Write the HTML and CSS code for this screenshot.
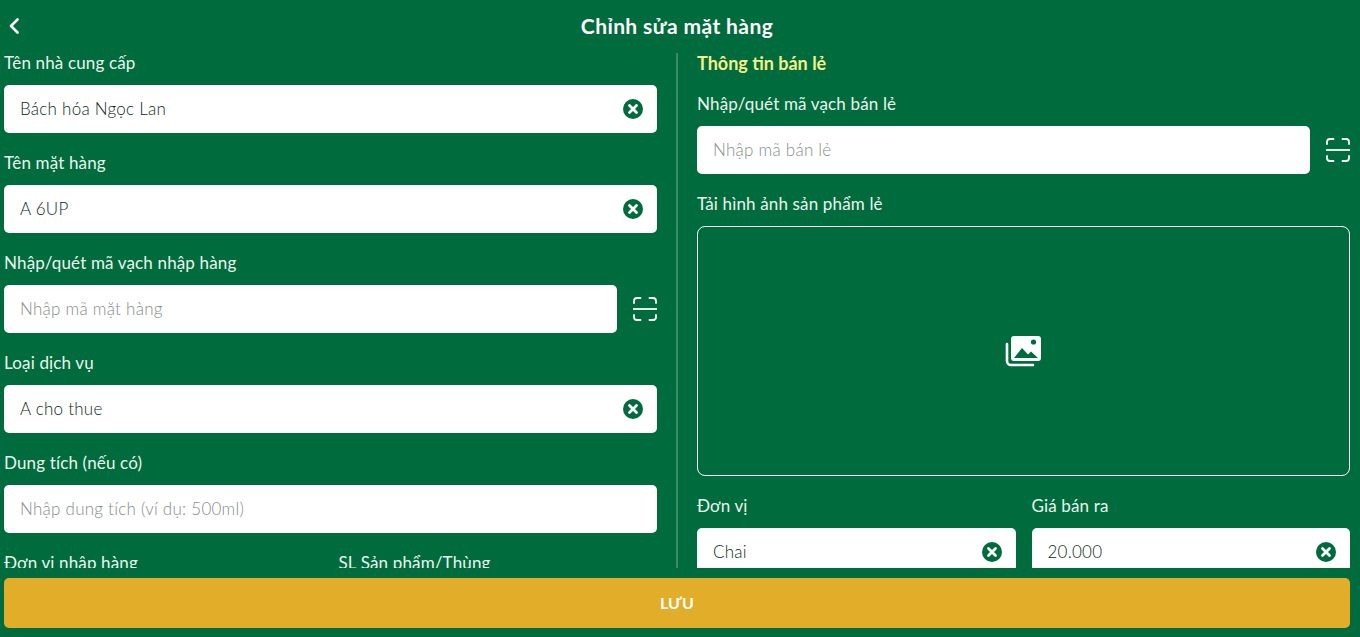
FILE: index.html
```html
<!DOCTYPE html>
<html lang="vi">
  <head>
    <meta charset="UTF-8" />
    <title>Chỉnh sửa mặt hàng</title>
    <link rel="stylesheet" href="styles.css">
  </head>

  <body>
    <svg class="icon-defs" width="0" height="0">
      <symbol id="clear" viewBox="0 0 20 20">
        <circle cx="10" cy="10" r="10" fill="#006b3c" />
        <path d="M6.500 6.500l7 7M13.500 6.500l-7 7" stroke="#fff" stroke-width="2.800" stroke-linecap="round" />
      </symbol>
      <symbol id="scan" viewBox="0 0 24 24">
        <path d="M1 6V4a3 3 0 0 1 3-3h3.500M16.500 1H20a3 3 0 0 1 3 3v2M1 18v2a3 3 0 0 0 3 3h3.500M16.500 23H20a3 3 0 0 0 3-3v-2" fill="none" stroke="#fff" stroke-width="1.800" stroke-linecap="round" />
        <path d="M0 12h24" stroke="#fff" stroke-width="1.800" />
      </symbol>
    </svg>

    <!-- Header -->
    <header class="topbar">
      <svg class="back-icon" width="12" height="16" viewBox="0 0 12 16">
        <path d="M9.500 1.500L3 8l6.500 6.500" fill="none" stroke="#fff" stroke-width="2.600" stroke-linecap="round" stroke-linejoin="round" />
      </svg>
      <h1>Chỉnh sửa mặt hàng</h1>
    </header>

    <!-- Form -->
    <main class="form-area">
      <section class="column">
        <div class="field">
          <label>Tên nhà cung cấp</label>
          <div class="input-row">
            <div class="input"><span>Bách hóa Ngọc Lan</span><svg class="clear-icon"><use href="#clear" /></svg></div>
          </div>
        </div>
        <div class="field">
          <label>Tên mặt hàng</label>
          <div class="input-row">
            <div class="input"><span>A 6UP</span><svg class="clear-icon"><use href="#clear" /></svg></div>
          </div>
        </div>
        <div class="field">
          <label>Nhập/quét mã vạch nhập hàng</label>
          <div class="input-row">
            <div class="input placeholder"><span>Nhập mã mặt hàng</span></div>
            <svg class="scan-icon"><use href="#scan" /></svg>
          </div>
        </div>
        <div class="field">
          <label>Loại dịch vụ</label>
          <div class="input-row">
            <div class="input"><span>A cho thue</span><svg class="clear-icon"><use href="#clear" /></svg></div>
          </div>
        </div>
        <div class="field">
          <label>Dung tích (nếu có)</label>
          <div class="input-row">
            <div class="input placeholder"><span>Nhập dung tích (ví dụ: 500ml)</span></div>
          </div>
        </div>
        <div class="field-pair">
          <div class="field">
            <label>Đơn vị nhập hàng</label>
          </div>
          <div class="field">
            <label>SL Sản phẩm/Thùng</label>
          </div>
        </div>
      </section>

      <section class="column column-right">
        <h2>Thông tin bán lẻ</h2>
        <div class="field">
          <label>Nhập/quét mã vạch bán lẻ</label>
          <div class="input-row">
            <div class="input placeholder"><span>Nhập mã bán lẻ</span></div>
            <svg class="scan-icon"><use href="#scan" /></svg>
          </div>
        </div>
        <div class="field">
          <label>Tải hình ảnh sản phẩm lẻ</label>
          <div class="upload-box">
            <svg width="36" height="32" viewBox="0 0 36 32">
              <path d="M2 9v17a4 4 0 0 0 4 4h22" fill="none" stroke="#fff" stroke-width="2.600" stroke-linecap="round" />
              <rect x="6" y="1" width="30" height="25" rx="3" fill="#fff" />
              <circle cx="28.500" cy="7" r="2.600" fill="#006b3c" />
              <path d="M9 23l8-10 6 6.500 3-3 7 6.500z" fill="#006b3c" />
            </svg>
          </div>
        </div>
        <div class="field-pair">
          <div class="field">
            <label>Đơn vị</label>
            <div class="input-row">
              <div class="input"><span>Chai</span><svg class="clear-icon"><use href="#clear" /></svg></div>
            </div>
          </div>
          <div class="field">
            <label>Giá bán ra</label>
            <div class="input-row">
              <div class="input"><span>20.000</span><svg class="clear-icon"><use href="#clear" /></svg></div>
            </div>
          </div>
        </div>
      </section>
    </main>

    <!-- Save -->
    <div class="footer">
      <button class="save-button">LƯU</button>
    </div>
  </body>
</html>
```

FILE: styles.css
```css
/* General Styles */
html,
body {
  height: 100%;
}

body {
  font-family: "Lato", "Noto Sans", Arial, sans-serif;
  margin: 0;
  background-color: #006b3c;
  color: #fff;
  overflow: hidden;
  display: flex;
  flex-direction: column;
}

.icon-defs {
  display: none;
}

/* Header */
.topbar {
  height: 53px;
  flex: none;
  box-sizing: border-box;
  padding: 0 6px 2px 0;
  display: flex;
  align-items: center;
  justify-content: center;
  position: relative;
}

.topbar h1 {
  margin: 0;
  font-size: 21px;
  font-weight: 700;
  letter-spacing: 0.4px;
}

.back-icon {
  position: absolute;
  left: 8px;
  top: 18px;
}

/* Form */
.form-area {
  height: 515px;
  flex: none;
  overflow: hidden;
  display: grid;
  grid-template-columns: 653px 653px;
  column-gap: 40px;
  padding: 0 10px 0 4px;
}

.column {
  display: flex;
  flex-direction: column;
  gap: 20px;
  min-width: 0;
}

.column-right {
  position: relative;
}

.column-right::before {
  content: "";
  position: absolute;
  left: -21px;
  top: 0;
  bottom: 0;
  width: 2px;
  background-color: #3d8a63;
}

.column-right h2 {
  margin: 0;
  height: 21px;
  line-height: 21px;
  font-size: 18px;
  font-weight: 700;
  color: #f4f08a;
}

.field label {
  display: block;
  height: 32px;
  line-height: 19px;
  font-size: 17px;
  letter-spacing: 0.15px;
  color: #eaf6ef;
}

.input-row {
  display: flex;
  align-items: center;
  gap: 16px;
}

.input {
  flex: 1;
  height: 48px;
  min-width: 0;
  box-sizing: border-box;
  padding: 0 14px 2px 16px;
  background: #fff;
  border-radius: 5px;
  display: flex;
  align-items: center;
  justify-content: space-between;
  font-size: 17px;
  font-weight: 300;
  letter-spacing: 0.25px;
  color: #0d2a20;
}

.input.placeholder {
  color: #868d8a;
}

.clear-icon {
  width: 20px;
  height: 20px;
  flex: none;
  margin-top: 2px;
}

.scan-icon {
  width: 24px;
  height: 24px;
  flex: none;
}

.field-pair {
  display: grid;
  grid-template-columns: 1fr 1fr;
  column-gap: 16px;
}

.upload-box {
  height: 250px;
  box-sizing: border-box;
  border: 1px solid #fff;
  border-radius: 8px;
  display: flex;
  align-items: center;
  justify-content: center;
}

.upload-box svg {
  margin: 0 2px 1px 0;
}

/* Save Button */
.footer {
  flex: none;
  padding: 10px 10px 0 4px;
}

.save-button {
  display: block;
  width: 100%;
  height: 50px;
  padding: 0 0 2px;
  border: none;
  border-radius: 5px;
  background-color: #e2ae29;
  color: #fff;
  font-family: inherit;
  font-size: 16px;
  font-weight: 700;
}
```
